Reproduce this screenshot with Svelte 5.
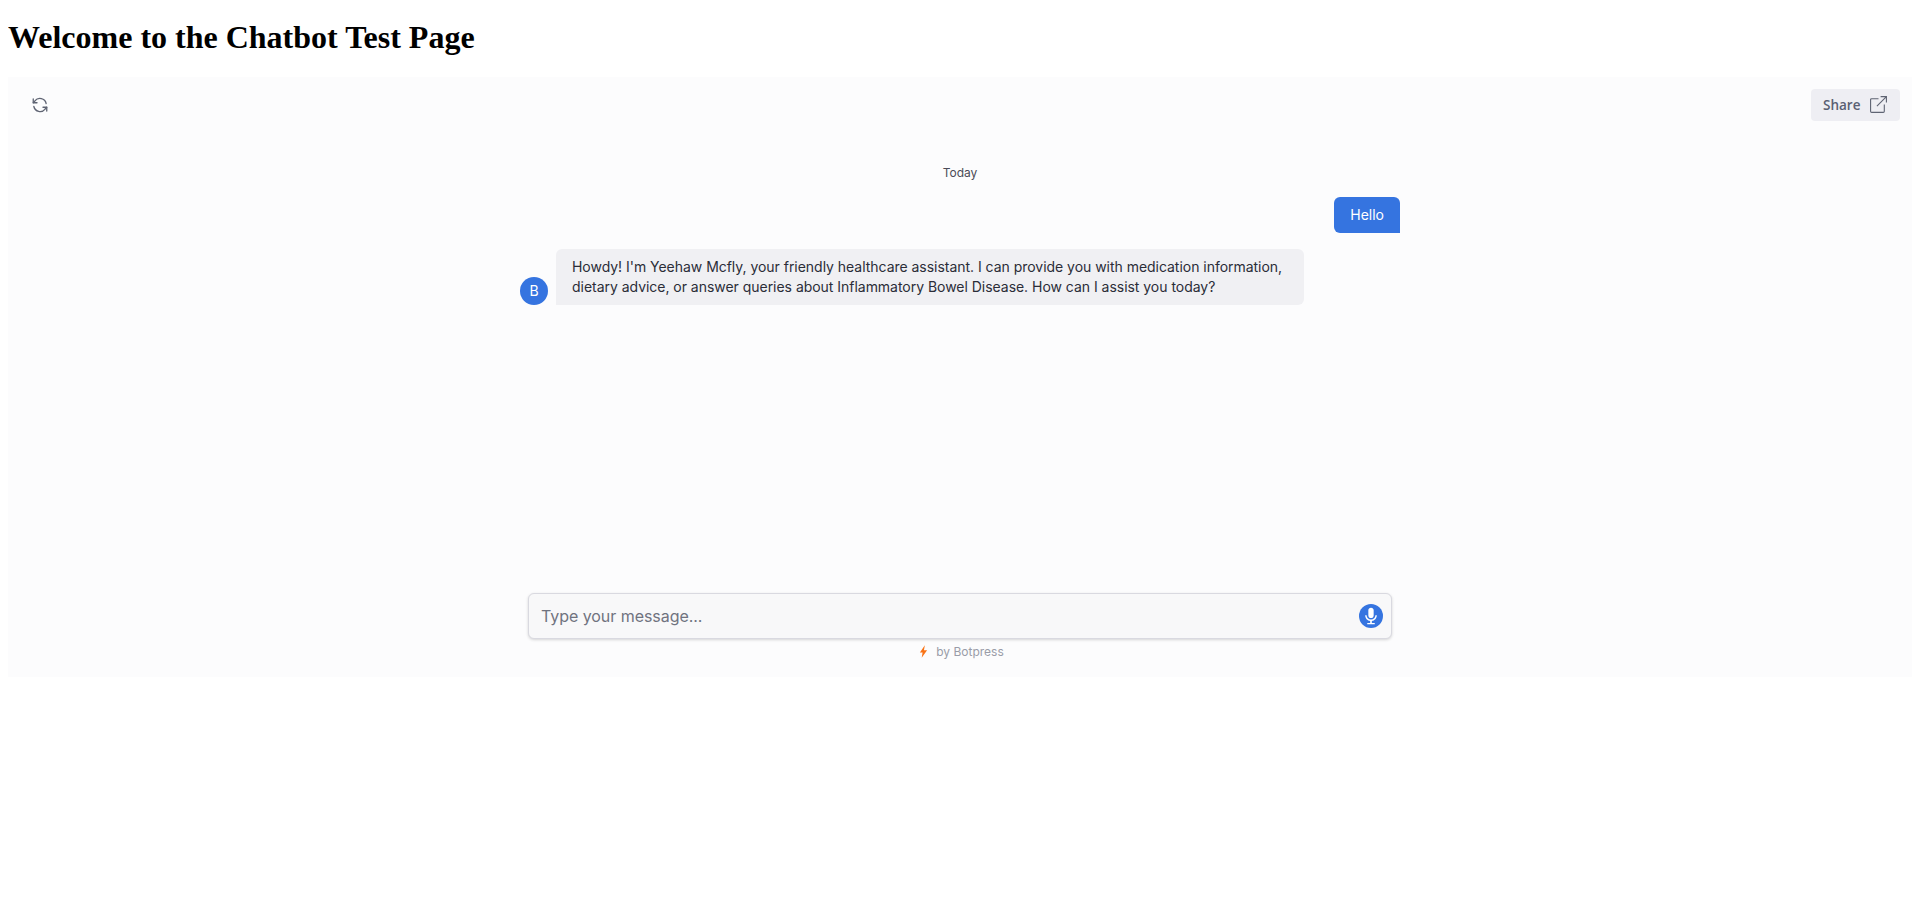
<script>
  const messageText = "Howdy! I'm Yeehaw Mcfly, your friendly healthcare assistant. I can provide you with medication information, dietary advice, or answer queries about Inflammatory Bowel Disease. How can I assist you today?";
</script>

<h1>Welcome to the Chatbot Test Page</h1>

<section class="chat">
  <header class="topbar">
    <button class="refresh" aria-label="Restart conversation">
      <svg viewBox="0 0 24 24" width="18" height="18" fill="none" stroke="#5f6473" stroke-width="1.75" stroke-linecap="round" stroke-linejoin="round">
        <path d="M3 4v5h5" />
        <path d="M21 20v-5h-5" />
        <path d="M20.200 10A8.500 8.500 0 0 0 5.200 6.600L3 9" />
        <path d="M3.800 14a8.500 8.500 0 0 0 15 3.400L21 15" />
      </svg>
    </button>
    <button class="share">
      <span>Share</span>
      <svg viewBox="0 0 18 18" width="19" height="19" fill="none" stroke="#5f6473" stroke-width="1.05">
        <path d="M9 3.500H2.500a1 1 0 0 0-1 1v11a1 1 0 0 0 1 1h11a1 1 0 0 0 1-1V9" />
        <path d="M7.500 10.500 16.500 1.500M11 1.500h5.500V7" />
      </svg>
    </button>
  </header>

  <div class="thread">
    <div class="today">Today</div>
    <div class="outgoing"><div class="bubble-out">Hello</div></div>
    <div class="incoming">
      <div class="avatar">B</div>
      <div class="bubble-in">{messageText}</div>
    </div>
  </div>

  <div class="composer">
    <input type="text" placeholder="Type your message..." />
    <button class="mic" aria-label="Record voice message">
      <svg viewBox="0 0 24 24" width="20" height="20" fill="#fff">
        <path d="M12 14.500c1.800 0 3.200-1.400 3.200-3.200V5.200C15.200 3.400 13.800 2 12 2S8.800 3.400 8.800 5.200v6.100c0 1.800 1.400 3.200 3.200 3.200z" />
        <path d="M17.300 11c0 3-2.400 5.200-5.300 5.200S6.700 14 6.700 11H5c0 3.600 2.700 6.500 6 7v2.300H7.500V22h9v-1.700H13V18c3.300-.5 6-3.400 6-7h-1.700z" />
      </svg>
    </button>
  </div>

  <footer class="credit">
    <svg viewBox="0 0 10 14" width="9" height="13" fill="#f97316"><path d="M6.500 0 1 8h3L3 14 9 5.500H5.500z" /></svg>
    <span>by Botpress</span>
  </footer>
</section>

<style>
  :global(body) {
    margin: 0 4px 8px 8px;
    background: #ffffff;
    font-family: "Liberation Serif", serif;
  }

  :global(#app) {
    display: flow-root;
  }

  h1 {
    font-family: "Liberation Serif", serif;
    font-size: 32px;
    font-weight: 700;
    color: #000;
    margin: 19.44px 0 20.56px;
  }

  .chat {
    height: 600px;
    background: #fcfcfd;
    display: flex;
    flex-direction: column;
    font-family: Inter, sans-serif;
    color: #1c2024;
  }

  .topbar {
    display: flex;
    align-items: center;
    justify-content: space-between;
    padding: 12px 12px 0 23px;
  }

  button {
    border: 0;
    background: none;
    padding: 0;
    display: flex;
    align-items: center;
  }

  .share {
    width: 89px;
    height: 32px;
    padding: 0 12px;
    justify-content: space-between;
    background: #eeeef3;
    border-radius: 4px;
    font-family: "Open Sans", sans-serif;
    font-size: 13.5px;
    font-weight: 600;
    color: #5a6072;
  }

  .thread {
    flex: 1;
    width: 880px;
    margin: 0 auto;
    display: flex;
    flex-direction: column;
  }

  .today {
    margin-top: 44px;
    text-align: center;
    font-size: 12px;
    line-height: 16px;
    color: #4b4b57;
  }

  .outgoing {
    display: flex;
    justify-content: flex-end;
    margin-top: 16px;
  }

  .bubble-out {
    background: #3574e0;
    color: #fff;
    font-size: 14px;
    line-height: 20px;
    padding: 8px 16px;
    border-radius: 6px 6px 0 6px;
  }

  .incoming {
    display: flex;
    align-items: flex-end;
    gap: 8px;
    margin-top: 16px;
  }

  .avatar {
    width: 28px;
    height: 28px;
    border-radius: 50%;
    background: #3574e0;
    color: #fff;
    font-size: 14px;
    display: flex;
    align-items: center;
    justify-content: center;
    flex: none;
  }

  .bubble-in {
    width: 748px;
    box-sizing: border-box;
    background: #f0f0f3;
    color: #2b2d38;
    font-size: 14px;
    line-height: 20px;
    letter-spacing: -0.03px;
    padding: 8px 16px;
    border-radius: 6px 6px 6px 0;
  }

  .composer {
    width: 864px;
    height: 46px;
    box-sizing: border-box;
    margin: 0 auto;
    display: flex;
    align-items: center;
    padding: 0 8px 0 12px;
    background: #f8f8f9;
    border: 1px solid #d9d9e0;
    border-radius: 6px;
    box-shadow: 0 1px 3px rgba(0, 0, 0, 0.16);
  }

  input {
    flex: 1;
    min-width: 0;
    border: 0;
    outline: 0;
    padding: 0;
    background: transparent;
    font-family: Inter, sans-serif;
    font-size: 16px;
    letter-spacing: -0.05px;
    color: #1c2024;
  }

  input::placeholder {
    color: #70737f;
    opacity: 1;
  }

  .mic {
    width: 24px;
    height: 24px;
    border-radius: 50%;
    background: #3574e0;
    justify-content: center;
  }

  .credit {
    display: flex;
    align-items: center;
    justify-content: center;
    gap: 8px;
    height: 38px;
    box-sizing: border-box;
    padding: 0 0 13px 3px;
    font-size: 12px;
    color: #9a9ca8;
  }
</style>
